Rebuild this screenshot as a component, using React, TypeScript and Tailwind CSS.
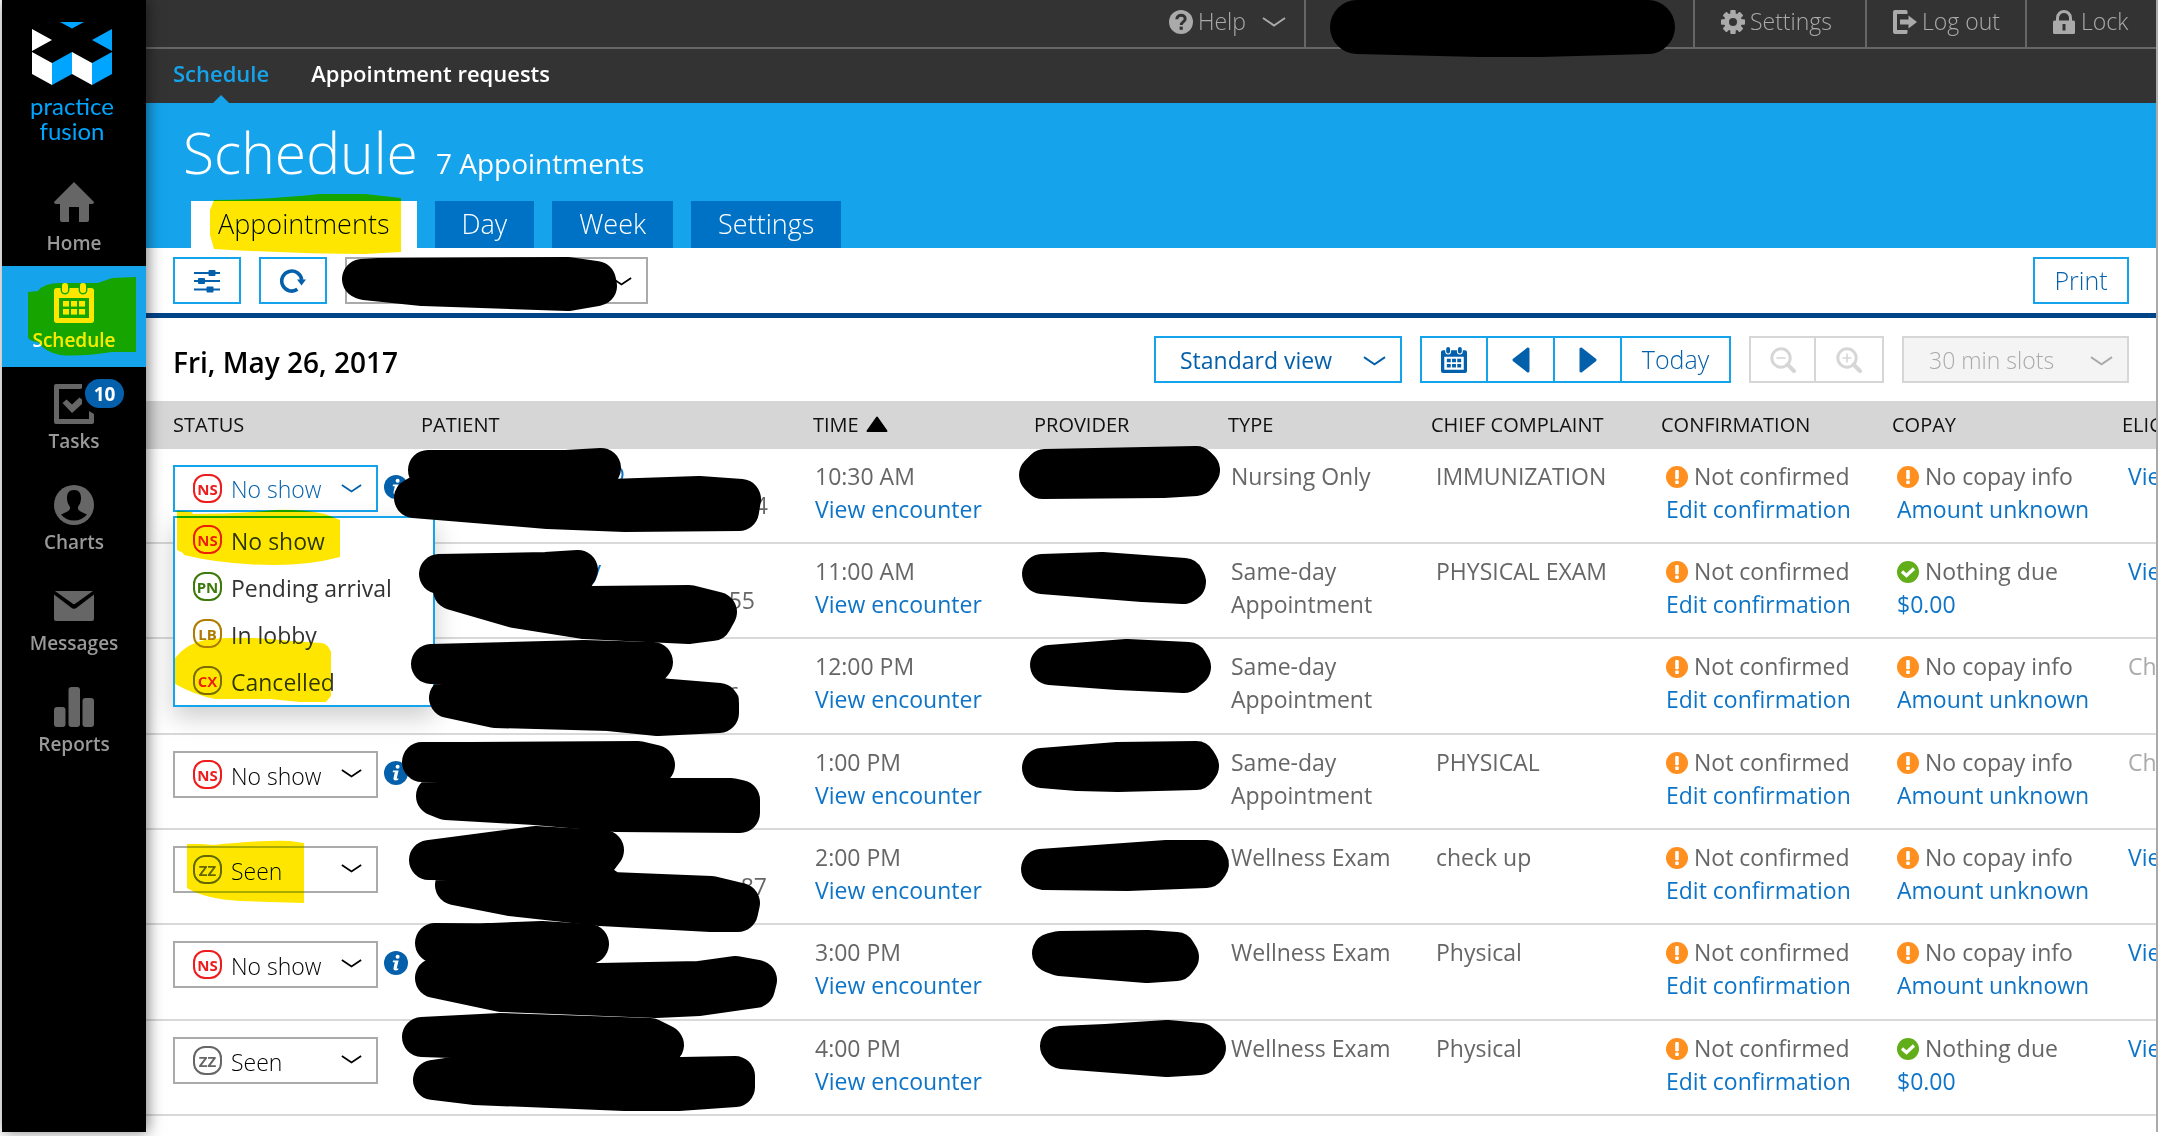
import React from "react";

type IconProps = { className?: string };

/* ---------- icons ---------- */

function Chevron({ className = "" }: IconProps) {
  return (
    <svg viewBox="0 0 24 10" className={className} fill="none" stroke="currentColor" strokeWidth="2" aria-hidden="true">
      <path d="M1 1 L12 8.5 L23 1" />
    </svg>
  );
}

function HomeIcon() {
  return (
    <svg viewBox="0 0 40 40" className="h-10 w-10" fill="currentColor" aria-hidden="true">
      <path d="M20 0 L40 20 Q40 22 38 22 H35 V38 Q35 40 33 40 H25 V25 H15 V40 H8 Q6 40 6 38 V22 H2 Q0 22 0 20 Z" />
    </svg>
  );
}

function CalendarIcon({ className = "h-10 w-10" }: IconProps) {
  return (
    <svg viewBox="0 0 40 40" className={className} fill="currentColor" aria-hidden="true">
      <path
        fillRule="evenodd"
        d="M3 5 H6.500 V7 A4.500 4.500 0 0 0 15.500 7 V5 H24.500 V7 A4.500 4.500 0 0 0 33.500 7 V5 H37 Q40 5 40 8 V37 Q40 40 37 40 H3 Q0 40 0 37 V8 Q0 5 3 5 Z M5 15 V35 H35 V15 Z"
      />
      <rect x="8" y="0" width="6" height="10" rx="3" />
      <rect x="26" y="0" width="6" height="10" rx="3" />
      <path d="M9 18h6v5.500H9z M17 18h6v5.500h-6z M25 18h6v5.500h-6z M9 26h6v5.500H9z M17 26h6v5.500h-6z M25 26h6v5.500h-6z" />
    </svg>
  );
}

function TasksIcon() {
  return (
    <svg viewBox="0 0 40 40" className="h-10 w-10" fill="currentColor" aria-hidden="true">
      <path d="M2 0 H28 V4 Q28 5 25 5 H5 V35 H35 V27 L40 30 V38 Q40 40 38 40 H2 Q0 40 0 38 V2 Q0 0 2 0 Z" />
      <path d="M8.500 19 L12.500 15.500 L18 20.500 L25.500 13.500 L28 15.500 V20 L18 29 Z" />
    </svg>
  );
}

function ChartsIcon() {
  return (
    <svg viewBox="0 0 40 40" className="h-10 w-10" aria-hidden="true">
      <circle cx="20" cy="20" r="20" fill="currentColor" />
      <path
        d="M20 5 C25 5 27 8 27 13 C27 18 25 20 24 22 C23.500 25 25 26 33 29.500 Q28 35.500 20 35.500 Q12 35.500 7 29.500 C15 26 16.500 25 16 22 C15 20 13 18 13 13 C13 8 15 5 20 5 Z"
        fill="#000"
      />
    </svg>
  );
}

function MessagesIcon() {
  return (
    <svg viewBox="0 0 40 40" className="h-10 w-10" fill="currentColor" aria-hidden="true">
      <path d="M1 5 H39 L21.500 17.500 Q20 18.500 18.500 17.500 Z" />
      <path d="M0 8.500 L17 21.500 Q20 24 23 21.500 L40 8.500 V33 Q40 35 38 35 H2 Q0 35 0 33 Z" />
    </svg>
  );
}

function ReportsIcon() {
  return (
    <svg viewBox="0 0 40 40" className="h-10 w-10" fill="currentColor" aria-hidden="true">
      <rect x="0" y="20" width="11.500" height="20" rx="3" />
      <rect x="14.500" y="0" width="11.500" height="40" rx="3" />
      <rect x="28.500" y="11" width="11.500" height="29" rx="3" />
    </svg>
  );
}

function HelpIcon() {
  return (
    <svg viewBox="0 0 24 24" className="h-6 w-6" aria-hidden="true">
      <circle cx="12" cy="12" r="12" fill="currentColor" />
      <path d="M7.800 9.200 C8 3.800 16.400 4 16.200 9 C16 12 12.200 11.800 12.200 15" fill="none" stroke="#333" strokeWidth="3" />
      <rect x="10.600" y="16.600" width="3.200" height="3.200" fill="#333" />
    </svg>
  );
}

function GearIcon() {
  return (
    <svg viewBox="0 0 24 24" className="h-6 w-6" aria-hidden="true">
      <g fill="currentColor">
        <rect x="9.300" y="0" width="5.400" height="24" rx="1" />
        <rect x="9.300" y="0" width="5.400" height="24" rx="1" transform="rotate(45 12 12)" />
        <rect x="9.300" y="0" width="5.400" height="24" rx="1" transform="rotate(90 12 12)" />
        <rect x="9.300" y="0" width="5.400" height="24" rx="1" transform="rotate(135 12 12)" />
        <circle cx="12" cy="12" r="9" />
      </g>
      <circle cx="12" cy="12" r="4" fill="#333" />
    </svg>
  );
}

function LogoutIcon() {
  return (
    <svg viewBox="0 0 24 24" className="h-6 w-6" fill="currentColor" aria-hidden="true">
      <path d="M2 0 H13 Q14.500 0 14.500 1.500 V4 H4 V20 H14.500 V22.500 Q14.500 24 13 24 H2 Q0 24 0 22 V2 Q0 0 2 0 Z" />
      <path d="M7 9.500 H15.500 V5.500 L24 12 L15.500 18.500 V14.500 H7 Z" />
    </svg>
  );
}

function LockIcon() {
  return (
    <svg viewBox="0 0 22 24" className="h-6 w-[22px]" aria-hidden="true">
      <path d="M4.500 12 V8 A6.500 6.500 0 0 1 17.500 8 V12" fill="none" stroke="currentColor" strokeWidth="3" />
      <rect x="0" y="10.500" width="22" height="13.500" rx="1.500" fill="currentColor" />
      <path d="M9.500 14h3v6.500h-3z" fill="#333" />
    </svg>
  );
}

function SlidersIcon() {
  return (
    <svg viewBox="0 0 26 24" className="h-6 w-[26px]" fill="currentColor" aria-hidden="true">
      <path d="M0 3h26v2H0z M0 11h26v2H0z M0 19.500h26v2H0z" />
      <rect x="14.500" y="1" width="7" height="6" rx="1" />
      <rect x="4" y="9" width="7" height="6" rx="1" />
      <rect x="12.500" y="17.500" width="7" height="6" rx="1" />
    </svg>
  );
}

function RefreshIcon() {
  return (
    <svg viewBox="0 0 26 24" className="h-6 w-[26px]" aria-hidden="true">
      <path d="M17.400 20.300 A10 10 0 1 1 21.700 11" fill="none" stroke="currentColor" strokeWidth="3.600" />
      <path d="M17 10.500 H26 L21.500 16.500 Z" fill="currentColor" />
    </svg>
  );
}

function ZoomIcon({ plus }: { plus?: boolean }) {
  return (
    <svg viewBox="0 0 26 26" className="h-[26px] w-[26px]" fill="none" stroke="currentColor" aria-hidden="true">
      <circle cx="11" cy="11" r="9.200" strokeWidth="3" />
      <path d="M17.500 17.500 L24 24" strokeWidth="4" strokeLinecap="round" />
      <path d={plus ? "M6.500 11 H15.500 M11 6.500 V15.500" : "M6.500 11 H15.500"} strokeWidth="1.600" />
    </svg>
  );
}

function InfoIcon() {
  return (
    <svg viewBox="0 0 24 24" className="h-6 w-6" aria-hidden="true">
      <circle cx="12" cy="12" r="12" fill="#0560ab" />
      <circle cx="13.600" cy="5.800" r="2" fill="#fff" />
      <path d="M9 9.600 H14.600 L12.700 17.500 H14.500 L14 19 Q9 20.500 9.500 17 L10.800 11.200 H8.700 Z" fill="#fff" />
    </svg>
  );
}

function WarnIcon() {
  return (
    <svg viewBox="0 0 22 22" className="h-[22px] w-[22px] shrink-0" aria-hidden="true">
      <circle cx="11" cy="11" r="11" fill="#ff8f1f" />
      <rect x="9.200" y="4" width="3.600" height="9.200" rx="1" fill="#fff" />
      <rect x="9.200" y="14.600" width="3.600" height="3.400" rx="1" fill="#fff" />
    </svg>
  );
}

function OkIcon() {
  return (
    <svg viewBox="0 0 22 22" className="h-[22px] w-[22px] shrink-0" aria-hidden="true">
      <circle cx="11" cy="11" r="11" fill="#62ae1a" />
      <path d="M5 10.500 L9.500 14.500 L17 7.500" fill="none" stroke="#fff" strokeWidth="3.200" />
    </svg>
  );
}

function Logo() {
  return (
    <svg viewBox="0 0 80 63" className="h-[63px] w-20" aria-hidden="true">
      <path d="M28 0 H52 L40 6.500 Z M80 7 L60 18 L80 29 Z M20 41 L40 30 V52 L20 63 Z M60 41 L80 30 V52 L60 63 Z" fill="#00a5ff" />
      <path d="M0 7 L20 18 L0 29 Z M0 30 L20 41 V63 L0 52 Z M40 30 L60 41 V63 L40 52 Z" fill="#fff" />
    </svg>
  );
}

/* ---------- marker annotations ---------- */

function Marker({ className = "", viewBox, d }: { className?: string; viewBox: string; d: string }) {
  return (
    <svg viewBox={viewBox} className={"pointer-events-none absolute z-20 overflow-visible mix-blend-darken " + className} aria-hidden="true">
      <path d={d} fill="#ffe600" />
    </svg>
  );
}

const PATIENT_MARKS = [
  "M428 470 L476 475 L601 468 L600 470 Z M414 498 L428 490 L610 499 L699 496 L741 499 L739 511 L625 512 L548 509 Z",
  "M439 574 L546 572 L578 570 L572 580 Z M453 590 L592 606 L689 605 L717 612 L712 621 L689 624 L584 619 L515 608 Z",
  "M431 664 L584 660 L653 662 L648 668 Z M449 698 L600 690 L670 699 L719 703 L719 713 L658 716 L609 711 L495 708 Z",
  "M422 762 L470 762 L638 761 L655 765 Z M436 796 L446 800 L535 805 L617 812 L740 813 L740 800 L731 798 L600 798 Z",
  "M429 860 L535 846 L604 850 L595 862 Z M455 885 L590 878 L611 892 L711 896 L740 903 L738 912 L711 912 L601 906 L511 896 Z",
  "M435 943 L444 945 L542 941 L589 944 Z M435 978 L600 983 L699 981 L735 976 L757 980 L755 988 L699 996 L656 998 L501 992 Z",
  "M422 1037 L501 1033 L650 1038 L664 1045 Z M433 1080 L500 1070 L682 1077 L735 1076 L735 1087 L678 1091 L625 1091 L474 1085 Z",
];

const PROVIDER_MARKS = [
  "M1039 475 L1045 469 L1196 466 L1200 470 L1196 476 L1163 478 L1043 479 Z",
  "M1042 574 L1102 572 L1184 578 L1186 582 L1183 584 L1143 582 Z",
  "M1050 665 L1127 659 L1188 662 L1191 667 L1184 673 L1118 670 Z",
  "M1042 768 L1118 762 L1196 761 L1199 766 L1196 770 L1118 772 L1078 771 Z",
  "M1041 869 L1167 860 L1207 860 L1209 864 L1206 868 L1127 871 L1045 870 Z",
  "M1052 953 L1060 951 L1147 950 L1176 952 L1179 957 L1176 961 L1147 963 L1060 956 Z",
  "M1060 1046 L1106 1044 L1167 1040 L1200 1043 L1206 1048 L1200 1055 L1167 1057 L1062 1049 Z",
];

function TableMarks() {
  return (
    <svg viewBox="146 401 1100 731" className="pointer-events-none absolute left-0 top-0 z-20 h-[731px] w-[1100px] overflow-visible" aria-hidden="true">
      <g fill="#000" stroke="#000" strokeWidth="40" strokeLinejoin="round">
        {PATIENT_MARKS.concat(PROVIDER_MARKS).map((d) => (
          <path key={d} d={d} />
        ))}
      </g>
    </svg>
  );
}

/* ---------- shared controls ---------- */

const BADGES: Record<string, string> = {
  NS: "text-[#ee1c1c] border-[#ee1c1c]",
  PN: "text-[#3c7a0a] border-[#3c7a0a]",
  LB: "text-[#b07c00] border-[#b07c00]",
  CX: "text-[#ee1c1c] border-[#7d6a10]",
  ZZ: "text-[#666] border-[#666]",
};

function Badge({ code }: { code: string }) {
  return (
    <span className={"flex h-[29px] w-[29px] shrink-0 items-center justify-center rounded-[12px] border-2 pt-0.5 text-[15px] font-bold leading-none " + BADGES[code]}>
      {code}
    </span>
  );
}

function StatusSelect({ code, label, name }: { code: string; label: string; name: string }) {
  return (
    <div className="relative h-[47px] w-[205px]">
      <select aria-label={name} defaultValue={label} className="h-full w-full appearance-none border-2 border-[#aaa] bg-white pl-14 pt-[3px] text-[23px] font-light text-black">
        <option>{label}</option>
      </select>
      <span className="pointer-events-none absolute left-5 top-[9px]">
        <Badge code={code} />
      </span>
      <Chevron className="pointer-events-none absolute right-4 top-[18px] h-[9px] w-[21px] text-black" />
    </div>
  );
}

function OpenStatus() {
  const options = [
    ["NS", "No show"],
    ["PN", "Pending arrival"],
    ["LB", "In lobby"],
    ["CX", "Cancelled"],
  ];
  return (
    <div className="relative h-[47px] w-[205px]">
      <button type="button" aria-haspopup="listbox" aria-expanded="true" className="flex h-full w-full items-center border-2 border-[#15a4ec] bg-white pl-[18px] pr-[14px] text-[23px] font-light text-[#0560ab]">
        <Badge code="NS" />
        <span className="ml-[9px] flex-1 pt-0.5 text-left">No show</span>
        <Chevron className="h-[9px] w-[21px]" />
      </button>
      <ul role="listbox" aria-label="Status" className="absolute left-0 top-[51px] z-10 h-[191px] w-[262px] border-2 border-[#15a4ec] bg-white text-[#333] shadow-[0_10px_24px_rgba(0,0,0,0.2)]">
        {options.map(([code, label]) => (
          <li key={code} role="option" aria-selected={code === "NS"} className="flex h-[47px] items-center gap-[9px] pb-1 pl-[18px]">
            <Badge code={code} />
            <span className="pt-1">{label}</span>
          </li>
        ))}
      </ul>
      <Marker className="left-0 top-[44px] h-[60px] w-[170px]" viewBox="173 508 170 60" d="M177 510 L192 511 L193 513 Q235 513 275 509 Q300 508 325 513 L340 519 V556 Q310 564 275 564 Q225 564 184 554 L183 552 L177 549 Z" />
      <Marker className="left-0 top-[173px] h-[70px] w-[170px]" viewBox="173 637 170 70" d="M175 657 Q187 642 205 639 Q240 634 290 640 L322 642 Q328 643 331 651 V695 L326 701 H300 L270 698 H215 Q195 694 175 683 Z" />
    </div>
  );
}

/* ---------- data ---------- */

type Row = {
  code: string;
  status: string;
  info?: boolean;
  name?: [string, string];
  detail?: [string, string];
  time: string;
  type: string;
  complaint: string;
  paid?: boolean;
  elig: "View" | "Check";
};

const ROWS: Row[] = [
  { code: "NS", status: "No show", info: true, name: ["D", "w-[204px]"], detail: ["4", "w-[347px]"], time: "10:30 AM", type: "Nursing Only", complaint: "IMMUNIZATION", elig: "View" },
  { code: "NS", status: "No show", name: ["y", "w-[180px]"], detail: ["55", "w-[334px]"], time: "11:00 AM", type: "Same-day Appointment", complaint: "PHYSICAL EXAM", paid: true, elig: "View" },
  { code: "NS", status: "No show", detail: ["6", "w-[319px]"], time: "12:00 PM", type: "Same-day Appointment", complaint: "", elig: "Check" },
  { code: "NS", status: "No show", info: true, time: "1:00 PM", type: "Same-day Appointment", complaint: "PHYSICAL", elig: "Check" },
  { code: "ZZ", status: "Seen", detail: ["87", "w-[346px]"], time: "2:00 PM", type: "Wellness Exam", complaint: "check up", elig: "View" },
  { code: "NS", status: "No show", info: true, time: "3:00 PM", type: "Wellness Exam", complaint: "Physical", elig: "View" },
  { code: "ZZ", status: "Seen", time: "4:00 PM", type: "Wellness Exam", complaint: "Physical", paid: true, elig: "View" },
];

const COLUMNS: [string, string][] = [
  ["STATUS", "w-[275px] pl-[27px]"],
  ["PATIENT", "w-[392px]"],
  ["TIME", "w-[221px]"],
  ["PROVIDER", "w-[194px]"],
  ["TYPE", "w-[203px]"],
  ["CHIEF COMPLAINT", "w-[230px]"],
  ["CONFIRMATION", "w-[231px]"],
  ["COPAY", "w-[230px]"],
  ["ELIGIBILITY", "w-[160px]"],
];

const CELL = "h-[95px] border-b-2 border-[#d9d9d9] pt-[11px] align-top";
const LINK = "text-[#0d74c8]";

function AppointmentRow({ row, open }: { row: Row; open: boolean }) {
  return (
    <tr>
      <td className={CELL + " pl-[27px]"}>
        <div className="relative flex items-start gap-[6px] pt-[5px]">
          {open ? <OpenStatus /> : <StatusSelect code={row.code} label={row.status} name={"Status for " + row.time} />}
          {row.info && (
            <span className="pt-[10px]">
              <InfoIcon />
            </span>
          )}
          {row.code === "ZZ" && row.complaint === "check up" && (
            <Marker className="left-0 top-[-1px] h-[64px] w-[140px]" viewBox="173 840 140 64" d="M187 844 H202 L213 845 Q260 840 290 841 L304 843 V903 Q270 902 240 901 Q205 899 187 888 Z" />
          )}
        </div>
      </td>
      <td className={CELL}>
        <div className="h-[29px]">{row.name && <a href="#patient" className={"block text-right leading-[29px] " + LINK + " " + row.name[1]}>{row.name[0]}</a>}</div>
        {row.detail && <div className={"text-right " + row.detail[1]}>{row.detail[0]}</div>}
      </td>
      <td className={CELL + " pl-0.5"}>
        <div>{row.time}</div>
        <a href="#encounter" className={LINK}>View encounter</a>
      </td>
      <td className={CELL} />
      <td className={CELL + " pl-[3px] pr-10"}>{row.type}</td>
      <td className={CELL + " pl-[5px]"}>{row.complaint}</td>
      <td className={CELL + " pl-[5px]"}>
        <div className="flex items-center gap-1.5">
          <WarnIcon />
          Not confirmed
        </div>
        <a href="#confirmation" className={LINK}>Edit confirmation</a>
      </td>
      <td className={CELL + " pl-[5px]"}>
        <div className="flex items-center gap-1.5">
          {row.paid ? <OkIcon /> : <WarnIcon />}
          {row.paid ? "Nothing due" : "No copay info"}
        </div>
        <a href="#copay" className={LINK}>{row.paid ? "$0.00" : "Amount unknown"}</a>
      </td>
      <td className={CELL + " pl-[6px]"}>
        {row.elig === "View" ? <a href="#eligibility" className={LINK}>View</a> : <span className="text-[#aaa]">Check</span>}
      </td>
    </tr>
  );
}

/* ---------- page regions ---------- */

const NAV: { label: string; icon: React.ReactNode }[] = [
  { label: "Home", icon: <HomeIcon /> },
  { label: "Schedule", icon: <CalendarIcon /> },
  { label: "Tasks", icon: <TasksIcon /> },
  { label: "Charts", icon: <ChartsIcon /> },
  { label: "Messages", icon: <MessagesIcon /> },
  { label: "Reports", icon: <ReportsIcon /> },
];

function Sidebar() {
  return (
    <aside className="relative z-10 w-36 shrink-0 bg-black shadow-[2px_0_14px_rgba(0,0,0,0.5)]">
      <div className="flex h-[165px] flex-col items-center pr-1 pt-[22px]">
        <Logo />
        <div className="mt-2 text-center font-['Lato'] text-2xl/[25px] text-[#00a5ff]">
          practice
          <br />
          fusion
        </div>
      </div>
      <nav aria-label="Main">
        {NAV.map(({ label, icon }) => {
          const active = label === "Schedule";
          return (
            <a
              key={label}
              href={"#" + label.toLowerCase()}
              className={"relative flex h-[101px] flex-col items-center pt-[17px] text-[19px]/[26px] font-semibold " + (active ? "bg-[#15a4ec] text-white" : "text-[#666]")}
            >
              {icon}
              <span className={(label === "Home" ? "mt-2 " : "mt-1 ") + (active ? "text-white" : "text-[#999]")}>{label}</span>
              {label === "Tasks" && (
                <span className="absolute left-[83px] top-3 flex h-[29px] w-[39px] items-center justify-center rounded-full bg-[#0560ab] text-[19px] font-bold text-white">10</span>
              )}
              {active && (
                <Marker className="left-[26px] top-[11px] h-[78px] w-[108px]" viewBox="28 277 108 78" d="M28 292 L38 291 Q44 283 60 283 H98 L112 278 L136 277 V352 H112 Q80 357 60 355 Q45 352 38 342 Q32 342 28 338 Z" />
              )}
            </a>
          );
        })}
      </nav>
    </aside>
  );
}

const TOP = "flex items-center border-l-2 border-[#666] pb-[4px] pl-[26px]";

function TopBar() {
  return (
    <header className="bg-[#333] text-[#aaa]">
      <div className="relative flex h-[49px] justify-end border-b-2 border-[#666] text-[23px]">
        <button type="button" className="flex items-center pb-[4px] pr-[18px] font-light">
          <HelpIcon />
          <span className="ml-[5px] mr-4">Help</span>
          <Chevron className="h-[10px] w-6" />
        </button>
        <div className="relative w-[389px] border-l-2 border-[#666]">
          <svg viewBox="1306 0 389 60" className="pointer-events-none absolute left-0 top-0 z-20 h-[60px] w-[389px] overflow-visible" aria-hidden="true">
            <path d="M1357 27 L1480 30 L1540 30 L1648 27 Z" fill="#000" stroke="#000" strokeWidth="54" strokeLinejoin="round" />
          </svg>
        </div>
        <a href="#settings" className={TOP + " w-[172px] gap-[5px] font-light"}>
          <GearIcon />
          Settings
        </a>
        <a href="#logout" className={TOP + " w-[160px] gap-[5px] font-light"}>
          <LogoutIcon />
          Log out
        </a>
        <a href="#lock" className={TOP + " w-[131px] gap-[6px] font-light"}>
          <LockIcon />
          Lock
        </a>
      </div>
      <nav aria-label="Schedule sections" className="flex h-[54px] gap-[42px] pl-[27px] text-[22px] font-semibold">
        <a href="#schedule" className="relative flex items-center pb-1.5 text-[#15a4ec]">
          Schedule
          <span className="absolute bottom-0 left-1/2 -ml-2 h-2 w-4 bg-[#15a4ec] [clip-path:polygon(50%_0,100%_100%,0_100%)]" />
        </a>
        <a href="#requests" className="flex items-center pb-1.5 text-white">Appointment requests</a>
      </nav>
    </header>
  );
}

function Title() {
  const tab = "flex h-[47px] items-center px-[27px] text-[27px] font-light";
  return (
    <div className="flex h-[145px] flex-col justify-between bg-[#15a4ec] text-white">
      <div className="flex items-baseline gap-[18px] pl-[37px] pt-[7px]">
        <h1 className="text-[57px]/[84px] font-light">Schedule</h1>
        <p className="text-[28px]">7 Appointments</p>
      </div>
      <div role="tablist" className="flex gap-[18px] pl-[45px]">
        <button type="button" role="tab" aria-selected="true" className={tab + " relative bg-white text-black"}>
          Appointments
          <Marker className="left-[19px] top-[-7px] h-[60px] w-[191px]" viewBox="210 194 191 60" d="M214 200 Q260 200 320 194 H365 L401 198 V252 L365 254 Q300 254 214 249 L210 235 V210 Z" />
        </button>
        <button type="button" role="tab" aria-selected="false" className={tab + " bg-[#0072c6]"}>Day</button>
        <button type="button" role="tab" aria-selected="false" className={tab + " bg-[#0072c6]"}>Week</button>
        <button type="button" role="tab" aria-selected="false" className={tab + " bg-[#0072c6]"}>Settings</button>
      </div>
    </div>
  );
}

function Toolbar() {
  const box = "flex h-[47px] items-center justify-center border-2 border-[#15a4ec] bg-white text-[#0560ab]";
  return (
    <div className="flex h-[70px] items-start gap-[18px] border-b-[5px] border-[#004488] pl-[27px] pr-[27px] pt-[9px]">
      <button type="button" aria-label="Filters" className={box + " w-[68px]"}>
        <SlidersIcon />
      </button>
      <button type="button" aria-label="Refresh" className={box + " w-[68px]"}>
        <RefreshIcon />
      </button>
      <div className="relative h-[47px] w-[303px]">
        <select aria-label="Facility" className="h-full w-full appearance-none border-2 border-[#aaa] bg-white text-[23px]" />
        <Chevron className="pointer-events-none absolute right-4 top-5 h-[9px] w-[21px] text-black" />
        <svg viewBox="346 257 303 47" className="pointer-events-none absolute left-0 top-0 z-20 h-[47px] w-[303px] overflow-visible" aria-hidden="true">
          <path d="M363 279 L380 278 L569 277 L597 281 L598 286 L569 291 L424 286 L366 280 Z" fill="#000" stroke="#000" strokeWidth="40" strokeLinejoin="round" />
        </svg>
      </div>
      <button type="button" className={box + " ml-auto w-[96px] text-[25px] font-light"}>Print</button>
    </div>
  );
}

function DateBar() {
  const cell = "flex items-center justify-center";
  return (
    <div className="flex h-[83px] items-center pl-[27px] pr-[27px]">
      <h2 className="mr-auto pt-[5px] text-[28px] font-semibold text-black">Fri, May 26, 2017</h2>
      <div className="relative h-[47px] w-[248px]">
        <select aria-label="View" className="h-full w-full appearance-none border-2 border-[#15a4ec] bg-white pl-6 pt-0.5 text-[23px] text-[#0560ab]">
          <option>Standard view</option>
        </select>
        <Chevron className="pointer-events-none absolute right-4 top-5 h-[10px] w-[23px] text-[#0560ab]" />
      </div>
      <div className="ml-[18px] flex h-[47px] divide-x-2 divide-[#15a4ec] border-2 border-[#15a4ec] text-[#0560ab]">
        <button type="button" aria-label="Pick date" className={cell + " w-[66px]"}>
          <CalendarIcon className="h-[26px] w-[26px]" />
        </button>
        <button type="button" aria-label="Previous day" className={cell + " w-[67px]"}>
          <svg viewBox="0 0 18 26" className="h-[26px] w-[18px]" aria-hidden="true">
            <path d="M16 2 V24 L2 13 Z" fill="currentColor" stroke="currentColor" strokeWidth="3" strokeLinejoin="round" />
          </svg>
        </button>
        <button type="button" aria-label="Next day" className={cell + " w-[67px]"}>
          <svg viewBox="0 0 18 26" className="h-[26px] w-[18px]" aria-hidden="true">
            <path d="M2 2 V24 L16 13 Z" fill="currentColor" stroke="currentColor" strokeWidth="3" strokeLinejoin="round" />
          </svg>
        </button>
        <button type="button" className={cell + " w-[107px] text-[25px] font-light"}>Today</button>
      </div>
      <div className="ml-[18px] flex h-[47px] divide-x-2 divide-[#d6d6d6] border-2 border-[#d6d6d6] text-[#d6d6d6]">
        <button type="button" aria-label="Zoom out" disabled className={cell + " w-[65px]"}>
          <ZoomIcon />
        </button>
        <button type="button" aria-label="Zoom in" disabled className={cell + " w-[66px]"}>
          <ZoomIcon plus />
        </button>
      </div>
      <div className="relative ml-[18px] h-[47px] w-[227px]">
        <select aria-label="Slot length" disabled className="h-full w-full appearance-none border-2 border-[#d6d6d6] bg-[#f4f4f4] pl-[25px] pt-0.5 text-[23px] font-light text-[#aaa] opacity-100">
          <option>30 min slots</option>
        </select>
        <Chevron className="pointer-events-none absolute right-4 top-5 h-[10px] w-[23px] text-[#aaa]" />
      </div>
    </div>
  );
}

export default function App() {
  return (
    <div className="flex min-h-screen bg-white pb-1 pl-0.5 pr-1 font-['Open_Sans',sans-serif]">
      <Sidebar />
      <main className="min-w-0 flex-1 border-r-2 border-[#aaa]">
        <TopBar />
        <Title />
        <Toolbar />
        <DateBar />
        <div className="relative overflow-hidden">
          <table className="w-[2136px] table-fixed border-separate border-spacing-0 text-left text-[23px]/[33px] text-[#666]">
            <thead>
              <tr className="h-12 bg-[#d6d6d6] text-xl text-[#111]">
                {COLUMNS.map(([label, cls]) => (
                  <th key={label} scope="col" className={"font-normal " + cls}>
                    {label}
                    {label === "TIME" && (
                      <svg viewBox="0 0 22 16" className="ml-[7px] inline-block h-4 w-[22px] align-baseline" aria-hidden="true">
                        <path d="M11 1.500 L20.500 15 H1.500 Z" fill="#000" stroke="#000" strokeWidth="2" strokeLinejoin="round" />
                      </svg>
                    )}
                  </th>
                ))}
              </tr>
            </thead>
            <tbody className="[&>tr:nth-child(3n)>td]:h-24">
              {ROWS.map((row, i) => (
                <AppointmentRow key={row.time} row={row} open={i === 0} />
              ))}
            </tbody>
          </table>
          <TableMarks />
        </div>
      </main>
    </div>
  );
}
